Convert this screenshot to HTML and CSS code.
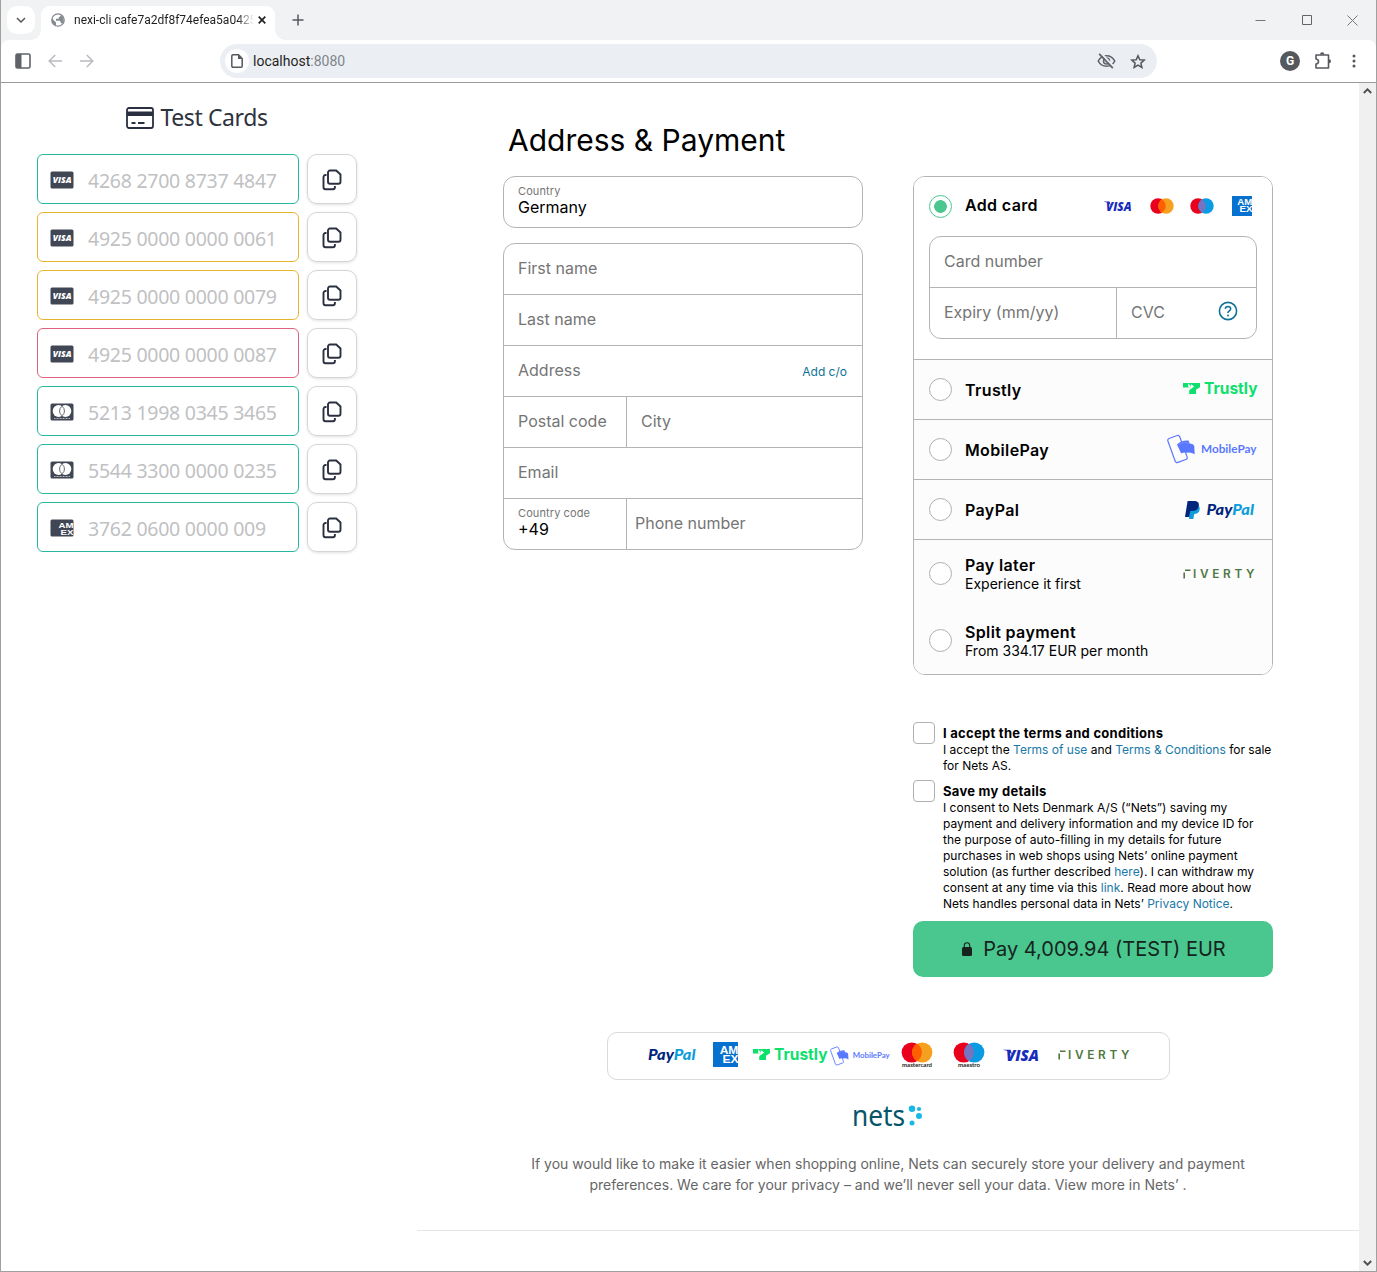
FILE: index.html
```html
<!DOCTYPE html>
<html lang="en">
<head>
<meta charset="utf-8">
<title>nexi-cli checkout</title>
<link rel="stylesheet" href="styles.css">
</head>
<body>
<svg class="defs" aria-hidden="true">
  <symbol id="copy" viewBox="0 0 20 22"><path d="M8 1.500h6.200l4.300 4v7.200a2 2 0 0 1-2 2H8a2 2 0 0 1-2-2V3.500a2 2 0 0 1 2-2zM4.500 6H3.500a2 2 0 0 0-2 2v10.300a2 2 0 0 0 2 2h7.400a2 2 0 0 0 2-2v-1.300" fill="none" stroke="#2b3040" stroke-width="1.9"/></symbol>
  <symbol id="visa-card" viewBox="0 0 24 18"><rect width="23" height="17" x=".5" y=".5" rx="1.500" fill="#404654"/><text x="2.700" y="12" class="visa-text" font-size="9" fill="#fff" textLength="18.800" lengthAdjust="spacingAndGlyphs">VISA</text></symbol>
  <symbol id="mc-card" viewBox="0 0 24 18"><rect width="23" height="17" x=".5" y=".5" rx="1.500" fill="#404654"/><circle cx="8.600" cy="8" r="5.900" fill="#fff"/><circle cx="15.400" cy="8" r="5.900" fill="#fff"/><path d="M12 3.200a5.900 5.900 0 0 1 0 9.600a5.900 5.900 0 0 1 0-9.600z" fill="#fff" stroke="#404654" stroke-width=".8"/><path d="M4 15.500h16" stroke="#d5d7dc" stroke-width=".8" stroke-dasharray="1 .5"/></symbol>
  <symbol id="amex-card" viewBox="0 0 24 18"><rect width="23" height="17" x=".5" y=".5" rx="1.500" fill="#404654"/><text x="8.500" y="8.500" class="amex-text" font-size="8" textLength="15" lengthAdjust="spacingAndGlyphs">AM</text><text x="10.500" y="15.500" class="amex-text" font-size="8" textLength="13" lengthAdjust="spacingAndGlyphs">EX</text></symbol>
  <symbol id="visa" viewBox="0 0 28 10"><text x="2" y="9.500" class="visa-text" font-size="12.600" fill="#172bbd" textLength="25.500" lengthAdjust="spacingAndGlyphs">VISA</text><path d="M0 .5h5.500l1.500 4C5.300 2.400 3 1.200 0 .8z" fill="#172bbd"/></symbol>
  <symbol id="mastercard" viewBox="0 0 24 16"><circle cx="8" cy="8" r="7.700" fill="#e8001c"/><circle cx="16" cy="8" r="7.700" fill="#f6a020"/><path d="M12 1.400a7.700 7.700 0 0 1 0 13.200a7.700 7.700 0 0 1 0-13.200z" fill="#ff5f00"/></symbol>
  <symbol id="maestro" viewBox="0 0 24 16"><circle cx="8" cy="8" r="7.700" fill="#e8001c"/><circle cx="16" cy="8" r="7.700" fill="#0b9be3"/><path d="M12 1.400a7.700 7.700 0 0 1 0 13.200a7.700 7.700 0 0 1 0-13.200z" fill="#7673c0"/></symbol>
  <symbol id="amex" viewBox="0 0 20 20"><path fill="#0671cf" d="M0 0h20v20H0z"/><text x="5.300" y="9.300" class="amex-text" font-size="8.200" textLength="15" lengthAdjust="spacingAndGlyphs">AM</text><text x="7.500" y="16.400" class="amex-text" font-size="8.200" textLength="13" lengthAdjust="spacingAndGlyphs">EX</text></symbol>
  <symbol id="trustly" viewBox="0 0 75 18"><path d="M0 2h17v4.200l-4 2.500V13H6.200V9.500L9 6.400H0z" fill="#0ee06e"/><path d="M5.200 2v4.400l3-.1zM7.800 8l3.400-2.500L7.800 3z" fill="#fcfcfc"/><text x="21" y="13" class="trustly-text" font-size="15.500" fill="#0ee06e" textLength="53.500" lengthAdjust="spacingAndGlyphs">Trustly</text></symbol>
  <symbol id="mobilepay" viewBox="0 0 90 30"><rect x="4.200" y="2.200" width="12.600" height="25.500" rx="2" transform="rotate(-20 10.500 15)" fill="none" stroke="#5a78ff" stroke-width="1.200"/><path d="M10 10.500q4-4.500 11.500-4l1.200 3q3.200 0 4.500 2.200l.5 8.600q-4-2.500-8-1.500-3-1-5.500.8z" fill="#5a78ff"/><path d="M11 10.300q6-3.200 11.500-1" fill="none" stroke="#7d92ff" stroke-width=".7"/><text x="34" y="18.500" class="mp-text" font-size="10.600" fill="#5a78ff" textLength="55.500" lengthAdjust="spacingAndGlyphs">MobilePay</text></symbol>
  <symbol id="pp-word" viewBox="0 0 49 17"><text x="0" y="13" class="pp-text" font-size="14.500" textLength="47.500" lengthAdjust="spacingAndGlyphs"><tspan fill="#00257c">Pay</tspan><tspan fill="#0d9ddb">Pal</tspan></text></symbol>
  <symbol id="riverty" viewBox="0 0 72 10"><path d="M1.200 9.500V3.500M2 1.200h5.500" stroke="#4e7741" stroke-width="1.600" fill="none"/><text x="10" y="9.400" class="riv-text" font-size="11.800" fill="#4e7741" textLength="61.500">IVERTY</text></symbol>
</svg>
<div class="window">
  <div class="tabstrip">
    <div class="tab-search"><svg width="10" height="6" viewBox="0 0 10 6"><path d="m1 1 4 4 4-4" fill="none" stroke="#55585d" stroke-width="1.500"/></svg></div>
    <div class="tab">
      <svg width="14" height="14" viewBox="0 0 14 14"><circle cx="7" cy="7" r="6.200" fill="#fff" stroke="#858a91" stroke-width="1.300"/><path d="M1 5.500 5 9.500v3.300A6 6 0 0 1 1 5.500zM4.500 2 9 1.200l1 1.600L7.700 4.500v1.300H5v2h4l1.200 2.600 1.600-.4A6.600 6.600 0 0 0 9.600 1.300L4.500 2z" fill="#858a91"/></svg>
      <span class="tab-title">nexi-cli cafe7a2df8f74efea5a0425</span>
      <svg width="8" height="8" viewBox="0 0 8 8"><path d="m.7.7 6.600 6.600m0-6.600L.7 7.300" stroke="#222" stroke-width="1.700"/></svg>
    </div>
    <svg class="plus" width="12" height="12" viewBox="0 0 12 12"><path d="M6 .5v11M.5 6h11" stroke="#55585d" stroke-width="1.500"/></svg>
    <div class="win-buttons">
      <svg width="11" height="11" viewBox="0 0 11 11"><path d="M.5 5.500h10" stroke="#777"/></svg>
      <svg width="11" height="11" viewBox="0 0 11 11"><path d="M1.500.5h9v9h-9z" fill="none" stroke="#666"/></svg>
      <svg width="11" height="11" viewBox="0 0 11 11"><path d="m.5.500 10 10m0-10-10 10" stroke="#777"/></svg>
    </div>
  </div>
  <div class="toolbar">
    <svg class="side" width="16" height="16" viewBox="0 0 16 16"><rect x="1" y="1" width="14" height="14" rx="1.500" fill="none" stroke="#5f6368" stroke-width="1.600"/><path d="M1 1h5.500v14H1z" fill="#5f6368"/></svg>
    <svg class="back" width="14" height="14" viewBox="0 0 14 14"><path d="M14 7H1.200M7.200 1 1.200 7l6 6" fill="none" stroke="#b9bbbe" stroke-width="1.500"/></svg>
    <svg class="fwd" width="14" height="14" viewBox="0 0 14 14"><path d="M0 7h12.800M6.800 1l6 6-6 6" fill="none" stroke="#b9bbbe" stroke-width="1.500"/></svg>
    <div class="omnibox">
      <span class="site"><svg width="12" height="14" viewBox="0 0 12 14"><path d="M2 .8h5.500l3.700 3.700v7.700a1 1 0 0 1-1 1H2a1.200 1.200 0 0 1-1.200-1.200V2A1.200 1.200 0 0 1 2 .8z" fill="none" stroke="#55585d" stroke-width="1.500"/><path d="M7 .8V5h4.200z" fill="#55585d"/></svg></span>
      <span class="url">localhost<span>:8080</span></span>
      <svg class="eye" width="19" height="16" viewBox="0 0 19 16"><path d="M1.200 8Q4 2.700 9.500 2.700T17.800 8Q15 13.300 9.500 13.300T1.200 8z" fill="none" stroke="#5f6368" stroke-width="1.600"/><circle cx="9.500" cy="8" r="3" fill="none" stroke="#5f6368" stroke-width="1.500"/><path d="m4 0 13 14" stroke="#ebeef3" stroke-width="2"/><path d="m2.200.8 13.600 14.400" stroke="#5f6368" stroke-width="1.700"/></svg>
      <svg width="16" height="15" viewBox="0 0 16 15"><path d="m8 1.700 1.800 4 4.500.4-3.400 3 1 4.400L8 11.200l-3.900 2.300 1-4.400-3.400-3 4.500-.4z" fill="none" stroke="#55585d" stroke-width="1.500"/></svg>
    </div>
    <div class="actions">
      <span class="avatar">G</span>
      <svg width="18" height="18" viewBox="0 0 18 18"><path d="M2 3h12.500v13H2v-4q2.500-.4 2.500-2.500T2 7z" fill="none" stroke="#55585d" stroke-width="1.600" stroke-linejoin="round"/><path d="M6 2.500a2.200 2.200 0 0 1 4.400 0zM15 7.300a2 2 0 0 1 0 4z" fill="#55585d"/></svg>
      <svg class="dots" width="4" height="14" viewBox="0 0 4 14"><g fill="#55585d"><circle cx="2" cy="2" r="1.500"/><circle cx="2" cy="7" r="1.500"/><circle cx="2" cy="12" r="1.500"/></g></svg>
    </div>
  </div>
  <div class="page">
    <aside class="test-cards">
      <h2><svg width="28" height="22" viewBox="0 0 28 22"><rect x="1" y="1" width="26" height="20" rx="2" fill="none" stroke="#2b3040" stroke-width="1.800"/><path d="M1 4.500h26v4.500H1z" fill="#2b3040"/><path d="M5.500 16h4m2.500 0h6.500" stroke="#2b3040" stroke-width="1.800"/></svg><span>Test Cards</span></h2>
      <div class="row"><div class="num ok"><svg><use href="#visa-card"/></svg><span>4268 2700 8737 4847</span></div><div class="copy"><svg><use href="#copy"/></svg></div></div>
      <div class="row"><div class="num warn"><svg><use href="#visa-card"/></svg><span>4925 0000 0000 0061</span></div><div class="copy"><svg><use href="#copy"/></svg></div></div>
      <div class="row"><div class="num warn"><svg><use href="#visa-card"/></svg><span>4925 0000 0000 0079</span></div><div class="copy"><svg><use href="#copy"/></svg></div></div>
      <div class="row"><div class="num bad"><svg><use href="#visa-card"/></svg><span>4925 0000 0000 0087</span></div><div class="copy"><svg><use href="#copy"/></svg></div></div>
      <div class="row"><div class="num ok"><svg><use href="#mc-card"/></svg><span>5213 1998 0345 3465</span></div><div class="copy"><svg><use href="#copy"/></svg></div></div>
      <div class="row"><div class="num ok"><svg><use href="#mc-card"/></svg><span>5544 3300 0000 0235</span></div><div class="copy"><svg><use href="#copy"/></svg></div></div>
      <div class="row"><div class="num ok"><svg><use href="#amex-card"/></svg><span>3762 0600 0000 009</span></div><div class="copy"><svg><use href="#copy"/></svg></div></div>
    </aside>
    <main class="checkout">
      <h1>Address &amp; Payment</h1>
      <div class="columns">
        <section class="address">
          <div class="group country"><div class="line"><div class="field filled"><small>Country</small><b>Germany</b></div></div></div>
          <div class="group">
            <div class="line"><div class="field">First name</div></div>
            <div class="line"><div class="field">Last name</div></div>
            <div class="line"><div class="field">Address<a>Add c/o</a></div></div>
            <div class="line"><div class="field short">Postal code</div><div class="field">City</div></div>
            <div class="line"><div class="field">Email</div></div>
            <div class="line"><div class="field filled short"><small>Country code</small><b>+49</b></div><div class="field phone">Phone number</div></div>
          </div>
        </section>
        <section class="payment">
          <div class="methods">
            <div class="card-method">
              <div class="card-head"><i class="radio on"></i><strong>Add card</strong>
                <div class="brands"><svg width="28" height="10"><use href="#visa"/></svg><svg width="24" height="16"><use href="#mastercard"/></svg><svg width="24" height="16"><use href="#maestro"/></svg><svg width="20" height="20"><use href="#amex"/></svg></div>
              </div>
              <div class="group">
                <div class="line"><div class="field">Card number</div></div>
                <div class="line"><div class="field expiry">Expiry (mm/yy)</div><div class="field cvc">CVC<svg width="20" height="20" viewBox="0 0 20 20"><circle cx="10" cy="10" r="8.600" fill="none" stroke="#0c7299" stroke-width="1.600"/><path d="M7.300 7.900q.1-2.500 2.700-2.500t2.700 2.300q0 1.300-1.400 2.200T10 12" fill="none" stroke="#0c7299" stroke-width="1.500"/><circle cx="10" cy="14.400" r="1" fill="#0c7299"/></svg></div></div>
              </div>
            </div>
            <div class="method"><i class="radio"></i><strong>Trustly</strong><svg class="l-trustly" width="75" height="18"><use href="#trustly"/></svg></div>
            <div class="method"><i class="radio"></i><strong>MobilePay</strong><svg class="l-mp" width="90" height="30"><use href="#mobilepay"/></svg></div>
            <div class="method"><i class="radio"></i><strong>PayPal</strong><svg class="l-pp" width="15" height="18" viewBox="0 0 15 18"><path d="M5.500 4h7.500q2.400 1.800 1.500 5.200Q13.400 13 9.300 13l-1 5H4z" fill="#0d9ddb"/><path d="M2.600 0h7.600q4.400.6 3.500 5.200Q12.600 10 7.500 10H5.300l-1 6H0z" fill="#00257c"/></svg><svg class="l-ppw" width="50" height="17"><use href="#pp-word"/></svg></div>
            <div class="later">
              <div class="method sub"><i class="radio"></i><div><strong>Pay later</strong><p>Experience it first</p></div><svg class="l-riv" width="72" height="10"><use href="#riverty"/></svg></div>
              <div class="method sub split"><i class="radio"></i><div><strong>Split payment</strong><p>From 334.17 EUR per month</p></div></div>
            </div>
          </div>
          <div class="consents">
            <div class="consent"><i class="box"></i><div><strong>I accept the terms and conditions</strong><p>I accept the <a>Terms of use</a> and <a>Terms &amp; Conditions</a> for sale<br>for Nets AS.</p></div></div>
            <div class="consent"><i class="box"></i><div><strong>Save my details</strong><p>I consent to Nets Denmark A/S (“Nets”) saving my<br>payment and delivery information and my device ID for<br>the purpose of auto-filling in my details for future<br>purchases in web shops using Nets’ online payment<br>solution (as further described <a>here</a>). I can withdraw my<br>consent at any time via this <a>link</a>. Read more about how<br>Nets handles personal data in Nets’ <a>Privacy Notice</a>.</p></div></div>
          </div>
          <div class="pay"><svg width="10" height="14" viewBox="0 0 10 14"><rect y="5" width="10" height="9" rx="1.500" fill="#17231d"/><path d="M2.300 6V3.500a2.700 2.700 0 0 1 5.400 0V6" fill="none" stroke="#17231d" stroke-width="1.100"/></svg><span>Pay 4,009.94 (TEST) EUR</span></div>
        </section>
      </div>
      <footer>
        <div class="logos">
          <svg class="f-pp" width="49" height="17"><use href="#pp-word"/></svg>
          <svg class="f-amex" width="25" height="25"><use href="#amex"/></svg>
          <svg class="f-trustly" width="75" height="18"><use href="#trustly"/></svg>
          <svg class="f-mp" width="60" height="20"><use href="#mobilepay"/></svg>
          <svg class="f-mc" width="32" height="27" viewBox="0 0 32 27"><use href="#mastercard" width="32" height="21"/><text x="1" y="25" class="mark" textLength="30" lengthAdjust="spacingAndGlyphs">mastercard</text></svg>
          <svg class="f-mae" width="32" height="27" viewBox="0 0 32 27"><use href="#maestro" width="32" height="21"/><text x="5" y="25" class="mark" textLength="22" lengthAdjust="spacingAndGlyphs">maestro</text></svg>
          <svg class="f-visa" width="37" height="13"><use href="#visa"/></svg>
          <svg class="f-riv" width="72" height="10"><use href="#riverty"/></svg>
        </div>
        <svg class="nets" width="70" height="24" viewBox="0 0 70 24"><text x="-1" y="20.500" class="nets-text" textLength="53" lengthAdjust="spacingAndGlyphs">nets</text><g fill="#17b8e6"><circle cx="59" cy="3.800" r="3.200"/><circle cx="66" cy="4" r="2.100"/><circle cx="66" cy="11" r="3"/><circle cx="59" cy="18" r="2.500"/></g></svg>
        <p>If you would like to make it easier when shopping online, Nets can securely store your delivery and payment<br>preferences. We care for your privacy – and we’ll never sell your data. View more in Nets’ .</p>
      </footer>
    </main>
    <div class="scrollbar"><svg width="9" height="6" viewBox="0 0 9 6"><path d="m.8 5 3.700-3.700L8.200 5" fill="none" stroke="#505050" stroke-width="1.900"/></svg><svg width="9" height="6" viewBox="0 0 9 6"><path d="m.8 1 3.700 3.700L8.200 1" fill="none" stroke="#505050" stroke-width="1.900"/></svg></div>
  </div>
</div>
</body>
</html>
```
FILE: styles.css
```css
* { box-sizing: border-box; }
body { margin: 0; background: #fff; font-family: Inter, sans-serif; color: #000; }
h1, h2, p { margin: 0; font-weight: 400; }
svg { display: block; flex: none; }
a { color: #0c7299; }
.defs { display: none; }
.window { width: 1377px; height: 1272px; border: 1px solid #a0a0a0; border-top: 0; display: flex; flex-direction: column; overflow: hidden; background: #f1f2f4; }

/* browser frame */
.tabstrip { height: 40px; flex: none; display: flex; align-items: center; background: #f1f2f4; padding-left: 6px; }
.tab-search { width: 28px; height: 28px; border-radius: 10px; background: #fff; display: flex; align-items: center; justify-content: center; }
.tab { width: 234px; height: 34px; margin: 6px 0 0 6px; padding: 0 8px 6px 10px; background: #fff; border-radius: 9px 9px 0 0; display: flex; align-items: center; position: relative; }
.tab::before, .tab::after { content: ""; position: absolute; bottom: 0; width: 10px; height: 10px; }
.tab::before { left: -10px; background: radial-gradient(circle at 0 0, transparent 9.500px, #fff 10px); }
.tab::after { right: -10px; background: radial-gradient(circle at 100% 0, transparent 9.500px, #fff 10px); }
.tab-title { width: 180px; margin: 0 4px 0 9px; font: 12px/16px Roboto, sans-serif; white-space: nowrap; overflow: hidden; color: #1f1f1f; -webkit-mask-image: linear-gradient(90deg, #000 91%, transparent); mask-image: linear-gradient(90deg, #000 91%, transparent); }
.plus { margin-left: 17px; }
.win-buttons { margin-left: auto; display: flex; gap: 35px; padding-right: 18px; }
.toolbar { height: 43px; flex: none; display: flex; align-items: center; background: #fff; border-bottom: 1px solid #9a9a9a; border-radius: 8px 8px 0 0; padding-left: 14px; }
.back { margin-left: 17px; }
.fwd { margin-left: 18px; }
.omnibox { width: 937px; height: 34px; margin-left: 126px; border-radius: 17px; background: #ebeef3; display: flex; align-items: center; padding: 0 11px 0 5px; }
.site { width: 24px; height: 24px; border-radius: 50%; background: #fff; display: flex; align-items: center; justify-content: center; }
.url { font: 14px/20px Roboto, sans-serif; margin: 0 auto 0 4px; color: #1f1f1f; }
.url span { color: #80858b; }
.eye { margin-right: 14px; }
.actions { margin-left: auto; display: flex; align-items: center; gap: 14px; padding-right: 20px; }
.avatar { width: 20px; height: 20px; border-radius: 50%; background: #55585d; color: #fff; font: 700 12px/20px Roboto, sans-serif; text-align: center; }
.dots { margin-left: 6px; }

.page { flex: 1; min-height: 0; display: flex; background: #fff; }
.scrollbar { width: 17px; background: #f0f0f0; display: flex; flex-direction: column; align-items: center; justify-content: space-between; padding: 5px 0; }

/* test card list */
.test-cards { width: 416px; padding: 17px 0 0 36px; }
.test-cards h2 { width: 320px; height: 35px; display: flex; align-items: center; justify-content: center; gap: 6px; font: 23px/35px "Noto Sans", sans-serif; letter-spacing: -.4px; color: #2e333d; margin-bottom: 19px; }
.row { display: flex; gap: 8px; margin-bottom: 8px; }
.num { width: 262px; height: 50px; border: 1px solid; border-radius: 6px; display: flex; align-items: center; padding-left: 12px; }
.num svg { width: 24px; height: 18px; margin: 1px 14px 0 0; }
.num span { font: 19.5px/28px "Noto Sans", sans-serif; letter-spacing: -.26px; color: #c0c1c3; padding-top: 3px; white-space: nowrap; }
.ok { border-color: #25b8a0; }
.warn { border-color: #e8b52e; }
.bad { border-color: #e0627f; }
.copy { width: 50px; height: 50px; border: 1px solid #d3d5d9; border-radius: 10px; box-shadow: 0 1px 3px rgba(0,0,0,.12); display: flex; align-items: center; justify-content: center; padding-top: 1px; }
.copy svg { width: 20px; height: 22px; }

/* checkout */
.checkout { width: 942px; }
h1 { font-size: 30px; line-height: 36px; margin: 39px 0 0 91px; height: 54px; white-space: nowrap; }
.columns { display: flex; gap: 50px; padding-left: 86px; height: 801px; }
.address, .payment { width: 360px; }
.group { border: 1px solid #b4b4b4; border-radius: 12px; overflow: hidden; background: #fff; }
.country { margin-bottom: 15px; }
.country .line { height: 50px; }
.line { height: 50px; display: flex; }
.line + .line { height: 51px; border-top: 1px solid #b4b4b4; }
.field { flex: 1; display: flex; align-items: center; padding: 0 14px 3px; font-size: 16px; color: #757575; white-space: nowrap; }
.field + .field { border-left: 1px solid #b4b4b4; }
.short { flex: 0 0 122px; }
.field.phone { padding-left: 8px; }
.field a { margin-left: auto; font-size: 12px; padding: 3px 1px 0 0; }
.filled { flex-direction: column; align-items: flex-start; justify-content: flex-start; padding-top: 8px; }
.filled small { font-size: 11px; line-height: 13px; letter-spacing: .1px; }
.filled b { font-weight: 400; font-size: 16px; line-height: 18px; color: #000; }

.methods { border: 1px solid #b4b4b4; border-radius: 12px; overflow: hidden; height: 499px; }
.card-method { height: 182px; padding: 0 15px; background: #fff; }
.card-head { height: 59px; display: flex; align-items: center; }
.card-head strong { padding-bottom: 3px; }
.methods strong { font-weight: 600; font-size: 16px; line-height: 20px; letter-spacing: .36px; white-space: nowrap; }
.radio { width: 23px; height: 23px; flex: none; border: 1px solid #b0b0b0; border-radius: 50%; margin-right: 13px; background: #fff; }
.radio.on { border-color: #49c78f; background: radial-gradient(circle, #49c78f 6px, #fff 6.700px); }
.brands { display: flex; align-items: center; margin-left: auto; padding: 0 5px 2px 0; gap: 18px; }
.brands svg:nth-child(3) { margin-left: -2px; }
.expiry { flex: 0 0 186px; }
.cvc svg { margin: 0 4px 1px auto; }
.method { height: 60px; border-top: 1px solid #b4b4b4; background: #fcfcfc; display: flex; align-items: center; padding: 0 15px; }
.method > strong { padding-top: 1px; }
.method > svg { margin-left: auto; }
.method > .l-trustly { margin-right: -1px; }
.method > .l-mp { margin-right: 0; margin-bottom: 1px; }
.method > .l-ppw { margin: 2px 1px 0 6px; }
.method > .l-riv { margin: 0 2px 0 auto; }
.later { border-top: 1px solid #b4b4b4; background: #fcfcfc; height: 135px; }
.sub { border-top: 0; height: 67px; }
.sub p { font-size: 14px; line-height: 17px; white-space: nowrap; }
.methods .sub strong { display: block; }

.consents { padding-top: 47px; height: 246px; }
.consent { display: flex; margin-bottom: 6px; }
.box { width: 22px; height: 22px; flex: none; border: 1px solid #b0b0b0; border-radius: 4px; margin-right: 8px; }
.consent strong { display: block; font-weight: 700; font-size: 13px; line-height: 16px; letter-spacing: .28px; padding: 3px 0 1px; white-space: nowrap; }
.consent p { font-size: 12px; line-height: 16px; white-space: nowrap; }
.consent a { color: #1878a8; }
.pay { height: 56px; border-radius: 10px; background: #49c78f; display: flex; align-items: center; justify-content: center; gap: 11px; padding-left: 2px; font-size: 20px; color: #17231d; white-space: nowrap; }

footer { display: flex; flex-direction: column; align-items: center; padding-top: 55px; border-bottom: 1px solid #e5e5e5; height: 254px; }
.logos { width: 563px; height: 48px; border: 1px solid #d9dadd; border-radius: 10px; display: flex; align-items: center; padding-left: 40px; }
.f-pp { margin-bottom: 2px; }
.f-amex { margin: 0 15px 3px 16px; }
.f-mp { margin-left: 2px; }
.f-mc { margin: 0 0 1px 11px; }
.f-mae { margin: 0 0 1px 20px; }
.f-visa { margin: 0 0 1px 18px; }
.f-riv { margin: 0 0 2px 18px; }
.nets { margin-top: 25px; }
footer p { font-size: 14px; line-height: 21px; color: #666; text-align: center; margin-top: 24px; white-space: nowrap; }

/* brand lettering */
.visa-text { font-family: "Open Sans", sans-serif; font-weight: 800; font-style: italic; }
.amex-text { font-family: "Liberation Sans", sans-serif; font-weight: 700; fill: #fff; }
.trustly-text { font-family: Inter, sans-serif; font-weight: 700; }
.mp-text { font-family: Lato, sans-serif; font-weight: 700; }
.pp-text { font-family: Lato, sans-serif; font-weight: 900; font-style: italic; }
.riv-text { font-family: Inter, sans-serif; font-weight: 600; }
.nets-text { font-family: "Noto Sans", sans-serif; font-size: 29px; fill: #06556b; }
.mark { font-family: Lato, sans-serif; font-size: 6px; font-weight: 700; fill: #222; }
```
